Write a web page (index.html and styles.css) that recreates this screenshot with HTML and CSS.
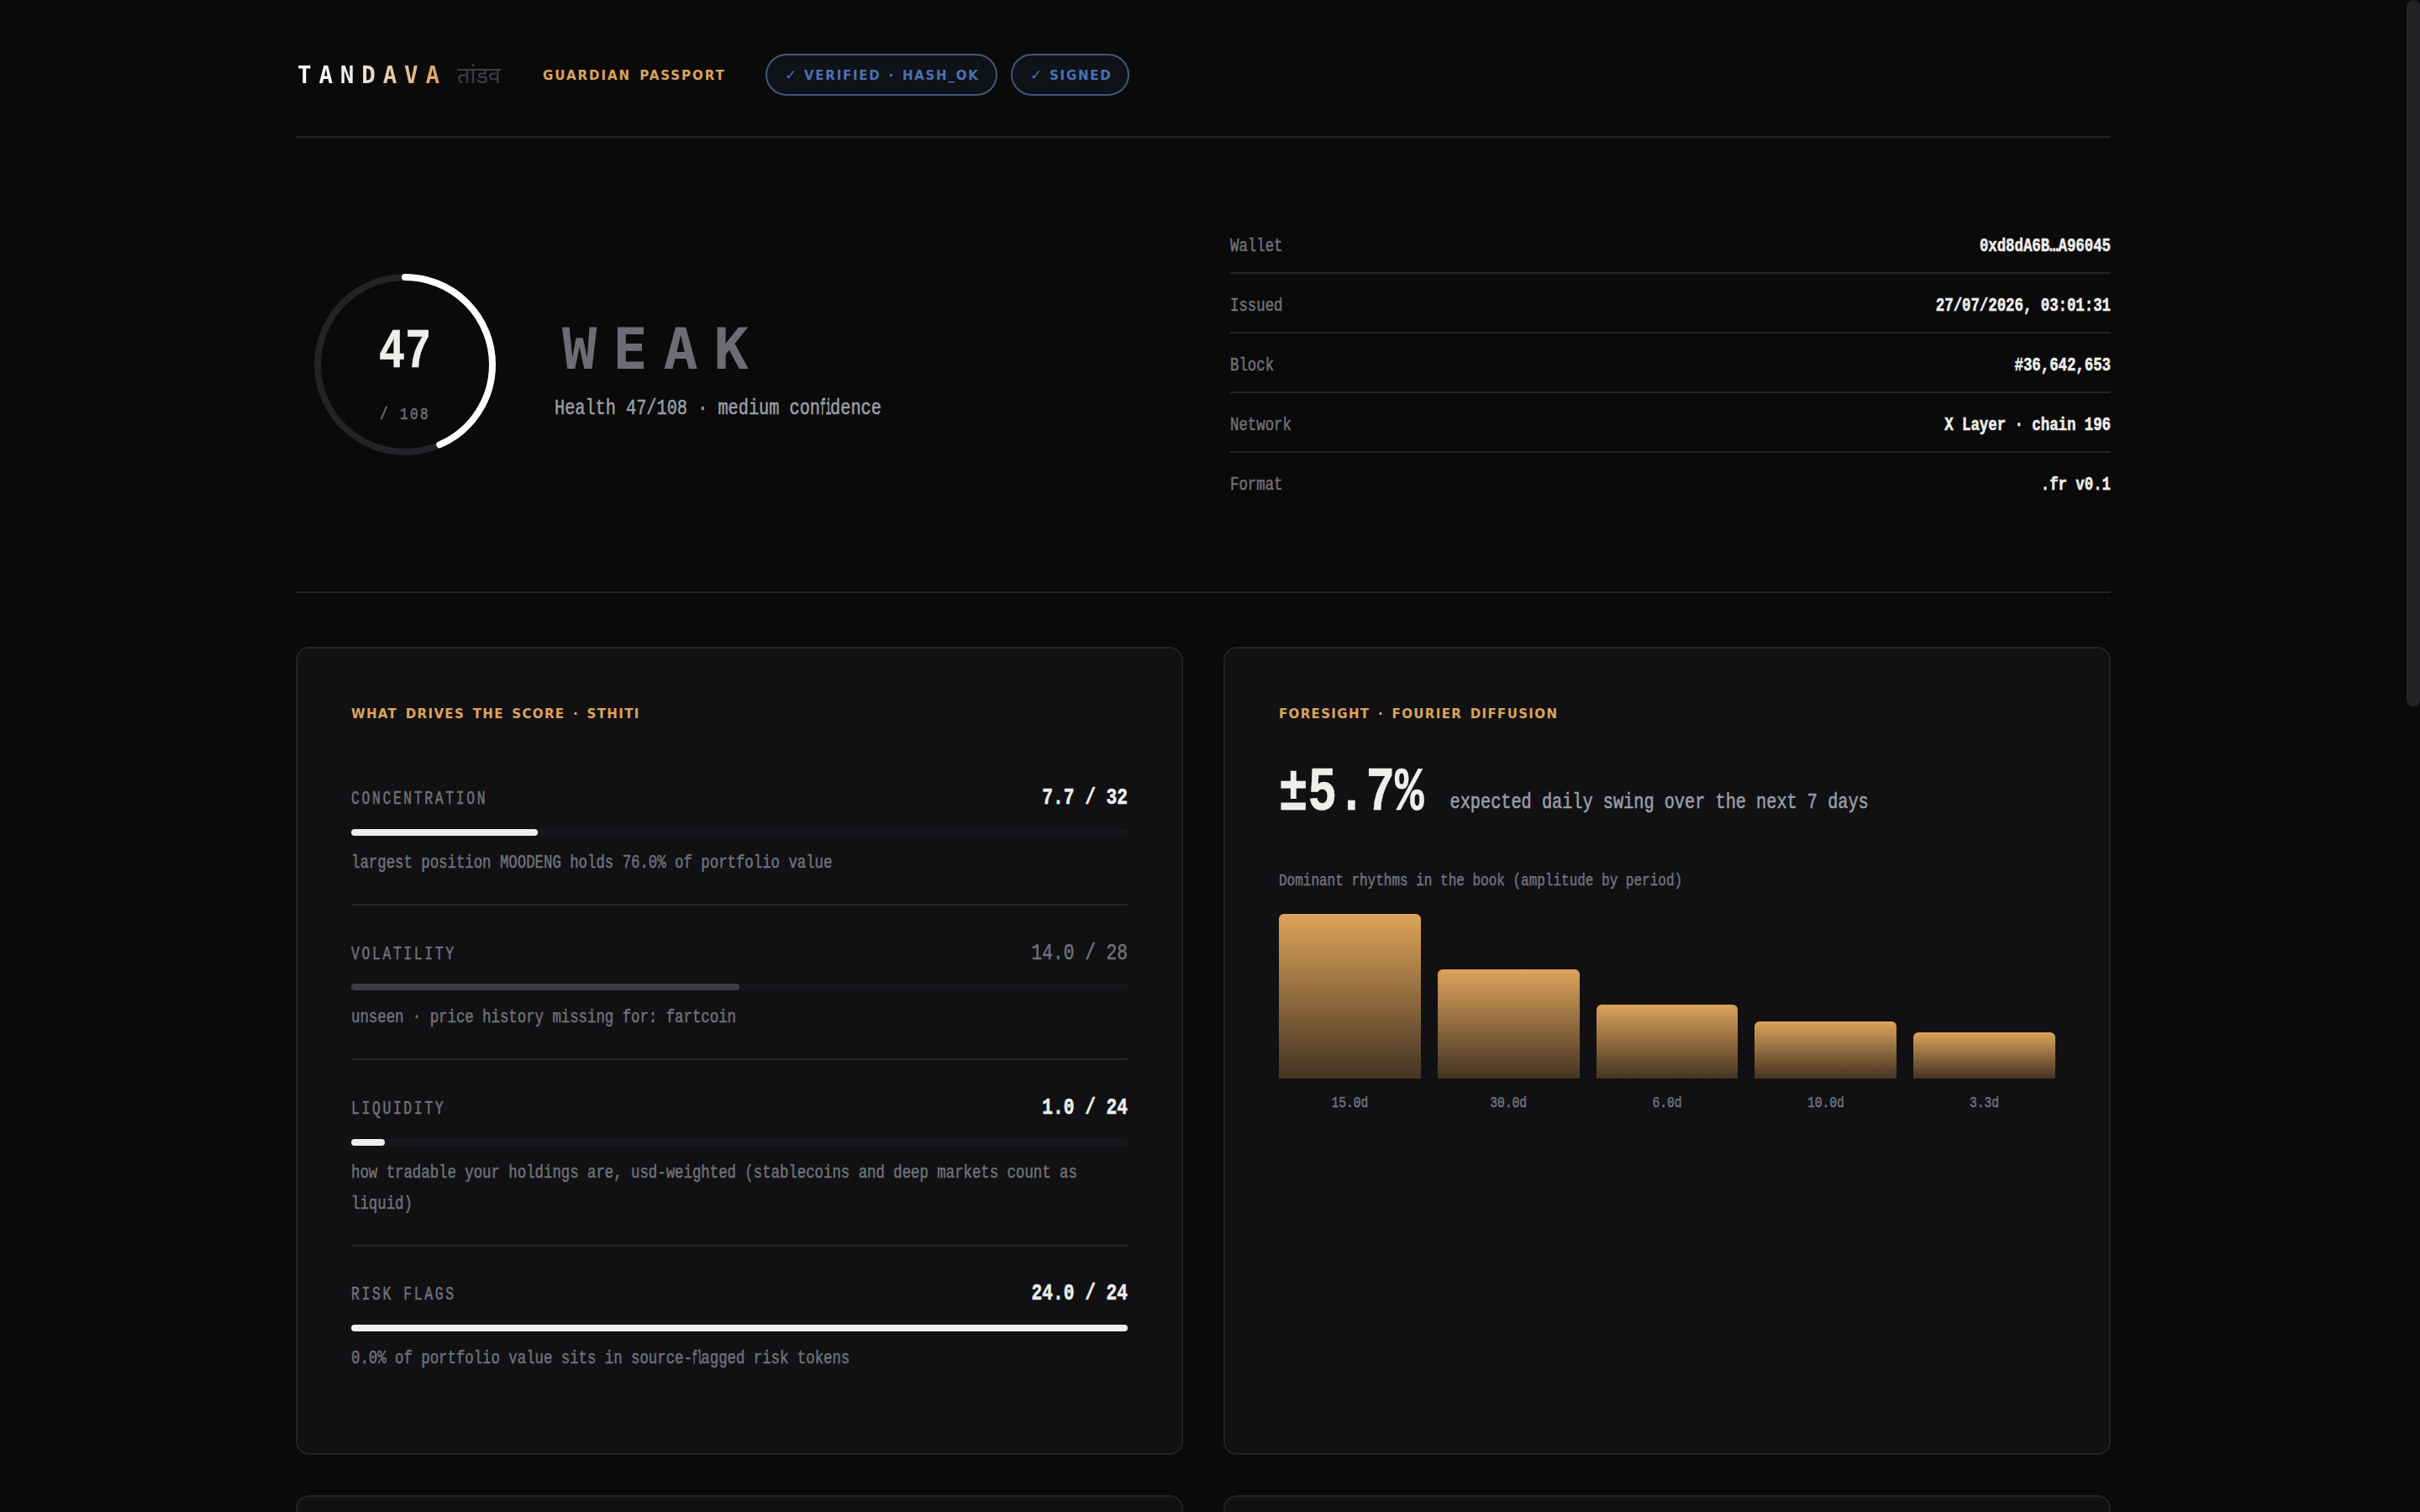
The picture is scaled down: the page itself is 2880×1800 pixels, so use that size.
FILE: index.html
```html
<!DOCTYPE html>
<html lang="en">
<head>
    <meta charset="UTF-8">
    <title>Tandava · Guardian Passport</title>
    <link rel="stylesheet" href="styles.css">
</head>
<body>
    <div class="page">
        <header class="topbar">
            <div class="brand">
                <span class="brand-name">TANDAVA</span>
                <span class="brand-sub">तांडव</span>
            </div>
            <span class="kicker">GUARDIAN PASSPORT</span>
            <div class="pills">
                <span class="pill pill-hash"><span class="check">✓</span>VERIFIED · HASH_OK</span>
                <span class="pill pill-signed"><span class="check">✓</span>SIGNED</span>
            </div>
        </header>

        <section class="hero">
            <div class="score">
                <div class="ring">
                    <svg viewBox="0 0 130 130" width="260" height="260">
                        <circle class="ring-track" cx="65" cy="65" r="52"/>
                        <circle class="ring-value" cx="65" cy="65" r="52" pathLength="108" stroke-dasharray="47 108" transform="rotate(-90 65 65)"/>
                    </svg>
                    <div class="ring-text">
                        <span class="ring-num tall">47</span>
                        <span class="ring-max tall">/ 108</span>
                    </div>
                </div>
                <div class="verdict">
                    <h1>WEAK</h1>
                    <p><span class="tall">Health 47/108 · medium con<span class="lig">fi</span>dence</span></p>
                </div>
            </div>
            <dl class="meta">
                <div class="meta-row"><dt class="tall">Wallet</dt><dd class="tall">0xd8dA6B…A96045</dd></div>
                <div class="meta-row"><dt class="tall">Issued</dt><dd class="tall">27/07/2026, 03:01:31</dd></div>
                <div class="meta-row"><dt class="tall">Block</dt><dd class="tall">#36,642,653</dd></div>
                <div class="meta-row"><dt class="tall">Network</dt><dd class="tall">X Layer · chain 196</dd></div>
                <div class="meta-row"><dt class="tall">Format</dt><dd class="tall">.fr v0.1</dd></div>
            </dl>
        </section>

        <main class="cards">
            <section class="card">
                <h2 class="title-drivers">WHAT DRIVES THE SCORE · STHITI</h2>
                <div class="driver">
                    <div class="driver-head"><span class="driver-name tall">CONCENTRATION</span><span class="driver-val tall">7.7 / 32</span></div>
                    <div class="track"><div class="fill" style="width: 24.06%"></div></div>
                    <p><span class="tall">largest position MOODENG holds 76.0% of portfolio value</span></p>
                </div>
                <div class="driver unseen">
                    <div class="driver-head"><span class="driver-name tall">VOLATILITY</span><span class="driver-val tall">14.0 / 28</span></div>
                    <div class="track"><div class="fill" style="width: 50%"></div></div>
                    <p><span class="tall">unseen · price history missing for: fartcoin</span></p>
                </div>
                <div class="driver">
                    <div class="driver-head"><span class="driver-name tall">LIQUIDITY</span><span class="driver-val tall">1.0 / 24</span></div>
                    <div class="track"><div class="fill" style="width: 4.3%"></div></div>
                    <p><span class="tall">how tradable your holdings are, usd-weighted (stablecoins and deep markets count as</span><br><span class="tall">liquid)</span></p>
                </div>
                <div class="driver">
                    <div class="driver-head"><span class="driver-name tall">RISK FLAGS</span><span class="driver-val tall">24.0 / 24</span></div>
                    <div class="track"><div class="fill" style="width: 100%"></div></div>
                    <p><span class="tall">0.0% of portfolio value sits in source-<span class="lig">fl</span>agged risk tokens</span></p>
                </div>
            </section>

            <section class="card">
                <h2 class="title-foresight">FORESIGHT · FOURIER DIFFUSION</h2>
                <div class="swing">
                    <span class="swing-num tall">±5.7%</span>
                    <span class="swing-text tall">expected daily swing over the next 7 days</span>
                </div>
                <p class="chart-note"><span class="tall">Dominant rhythms in the book (amplitude by period)</span></p>
                <div class="chart">
                    <div class="col"><div class="bar" style="height: 196px"></div><span class="tall">15.0d</span></div>
                    <div class="col"><div class="bar" style="height: 130px"></div><span class="tall">30.0d</span></div>
                    <div class="col"><div class="bar" style="height: 88px"></div><span class="tall">6.0d</span></div>
                    <div class="col"><div class="bar" style="height: 68px"></div><span class="tall">10.0d</span></div>
                    <div class="col"><div class="bar" style="height: 55px"></div><span class="tall">3.3d</span></div>
                </div>
            </section>

            <section class="card"></section>
            <section class="card"></section>
        </main>
    </div>
    <div class="scroll-thumb"></div>
</body>
</html>
```
FILE: styles.css
```css
* {
    box-sizing: border-box;
    margin: 0;
    padding: 0;
}

:root {
    --bg: #0a0a0a;
    --panel: #111113;
    --line: #232327;
    --text: #eeeeea;
    --soft: #9a9ea8;
    --muted: #6f7078;
    --amber: #dda45a;
}

html, body {
    height: 1800px;
    overflow: hidden;
    background: var(--bg);
}

body {
    font-family: "Liberation Mono", monospace;
    font-size: 17.35px;
    color: var(--text);
}

.page {
    width: 2160px;
    height: 1800px;
    margin-left: 352px;
    overflow: hidden;
}

/* narrow terminal lettering */
.tall {
    display: inline-block;
    transform: translateY(0.5px) scaleY(1.3);
    white-space: pre;
    -webkit-text-stroke: 0.45px;
}

/* fi / fl squeezed into one cell */
.lig {
    display: inline-block;
    width: 1ch;
    transform: scaleX(0.55);
    transform-origin: left;
    -webkit-text-stroke: 0.9px;
}

/* header */
.topbar {
    display: flex;
    align-items: center;
    height: 164px;
    border-bottom: 2px solid var(--line);
}

.topbar > * {
    margin-top: 16px;
}

.brand {
    display: flex;
    align-items: center;
    width: 294px;
}

.brand-name {
    font: bold 27.6px/50px "DejaVu Sans Mono", monospace;
    letter-spacing: 8.8px;
    width: 190px;
    margin-left: 2px;
    padding-top: 2px;
    white-space: nowrap;
    background: linear-gradient(90deg, #fff 0%, #eee 32%, #dda45a 88%);
    -webkit-background-clip: text;
    background-clip: text;
    color: transparent;
}

.brand-sub {
    font: 27px/50px "Noto Sans", sans-serif;
    color: #3d3d43;
}

.kicker, .pill, h2 {
    font: bold 15px/28px "DejaVu Sans", sans-serif;
    white-space: pre;
}

.kicker {
    width: 265px;
    letter-spacing: 1.95px;
    word-spacing: 3px;
    padding-top: 1px;
    color: var(--amber);
}

.pills {
    display: flex;
    gap: 16px;
}

.pill {
    height: 50px;
    line-height: 47px;
    padding-left: 21px;
    border: 2px solid #3f5878;
    border-radius: 25px;
    background: #0f1217;
    color: #4a72b4;
    letter-spacing: 1.75px;
    word-spacing: 2px;
}

.pill-hash {
    width: 276px;
}

.pill-signed {
    width: 141px;
}

.check {
    display: inline-block;
    width: 23px;
    font-size: 17px;
    font-weight: normal;
}

/* hero */
.hero {
    display: grid;
    grid-template-columns: 1fr 1fr;
    gap: 64px;
    height: 542px;
    border-bottom: 2px solid var(--line);
}

.score {
    display: flex;
    align-items: center;
    gap: 48px;
}

.ring {
    display: grid;
}

.ring > * {
    grid-area: 1 / 1;
}

.ring circle {
    fill: none;
    stroke-width: 4;
}

.ring-track {
    stroke: var(--line);
}

.ring-value {
    stroke: #fff;
    stroke-linecap: round;
}

.ring-text {
    display: flex;
    flex-direction: column;
    align-items: center;
    padding-top: 80px;
}

.ring-num {
    font-size: 52px;
    font-weight: bold;
    line-height: 72px;
}

.ring-max {
    margin-top: 22px;
    font-size: 16px;
    line-height: 30px;
    letter-spacing: 2.4px;
    color: var(--muted);
}

.verdict {
    padding-top: 12px;
}

h1 {
    font: bold 68.5px/80px "DejaVu Sans Mono", monospace;
    letter-spacing: 19px;
    padding-left: 9px;
    color: #6b6c74;
}

.verdict p {
    margin-top: 11px;
    font-size: 20.25px;
    line-height: 40px;
    color: var(--soft);
}

.meta {
    padding-top: 91px;
}

.meta-row {
    display: flex;
    justify-content: space-between;
    align-items: center;
    height: 71px;
    padding-top: 6px;
    border-bottom: 2px solid var(--line);
}

.meta-row:last-child {
    border-color: transparent;
}

.meta dt {
    color: var(--muted);
}

.meta dd {
    font-weight: bold;
}

/* cards */
.cards {
    display: grid;
    grid-template-columns: 1fr 1fr;
    grid-template-rows: 962px 400px;
    gap: 48px;
    padding-top: 64px;
}

.card {
    padding: 64px;
    border: 2px solid var(--line);
    border-radius: 16px;
    background: var(--panel);
}

h2 {
    color: var(--amber);
    letter-spacing: 1.35px;
    word-spacing: 3px;
}

.title-drivers {
    margin-bottom: 29.6px;
}

.driver {
    padding: 32px 0 31px;
    border-bottom: 2px solid var(--line);
}

.driver:last-child {
    border-bottom: none;
}

.driver-head {
    display: flex;
    justify-content: space-between;
    align-items: center;
    height: 47.4px;
    margin-bottom: 14px;
}

.driver-name {
    padding-top: 3px;
    font-size: 16.3px;
    letter-spacing: 2.7px;
    color: var(--muted);
}

.driver-val {
    font-size: 21.2px;
    font-weight: bold;
}

.unseen .driver-val {
    font-weight: normal;
    color: var(--muted);
}

.track {
    height: 8px;
    margin-bottom: 13px;
    border-radius: 4px;
    background: #16171b;
}

.fill {
    height: 8px;
    border-radius: 4px;
    background: var(--text);
}

.unseen .fill {
    background: #3d3d42;
}

.driver p {
    line-height: 37px;
    color: var(--muted);
}

.swing {
    display: flex;
    align-items: baseline;
    gap: 31px;
    height: 100px;
    margin-top: 40px;
}

.swing-num {
    font-size: 57.5px;
    font-weight: bold;
    line-height: 80px;
}

.swing-text {
    font-size: 20.25px;
    line-height: 24px;
    transform-origin: 0 8px;
    color: var(--soft);
}

.chart-note {
    margin-top: 29px;
    font-size: 16px;
    line-height: 30px;
    color: var(--muted);
}

.chart {
    display: flex;
    align-items: flex-end;
    gap: 20px;
    height: 263px;
}

.col {
    flex: 1;
    display: flex;
    flex-direction: column;
    align-items: center;
}

.bar {
    width: 100%;
    border-radius: 6px 6px 0 0;
    background: linear-gradient(#dda45a, #443323);
}

.col span {
    margin-top: 14px;
    font-size: 14.6px;
    line-height: 28px;
    color: var(--muted);
}

/* page scrollbar */
.scroll-thumb {
    position: absolute;
    top: 0;
    right: 0;
    width: 16px;
    height: 841px;
    border-radius: 8px;
    background: #232328;
}
```
